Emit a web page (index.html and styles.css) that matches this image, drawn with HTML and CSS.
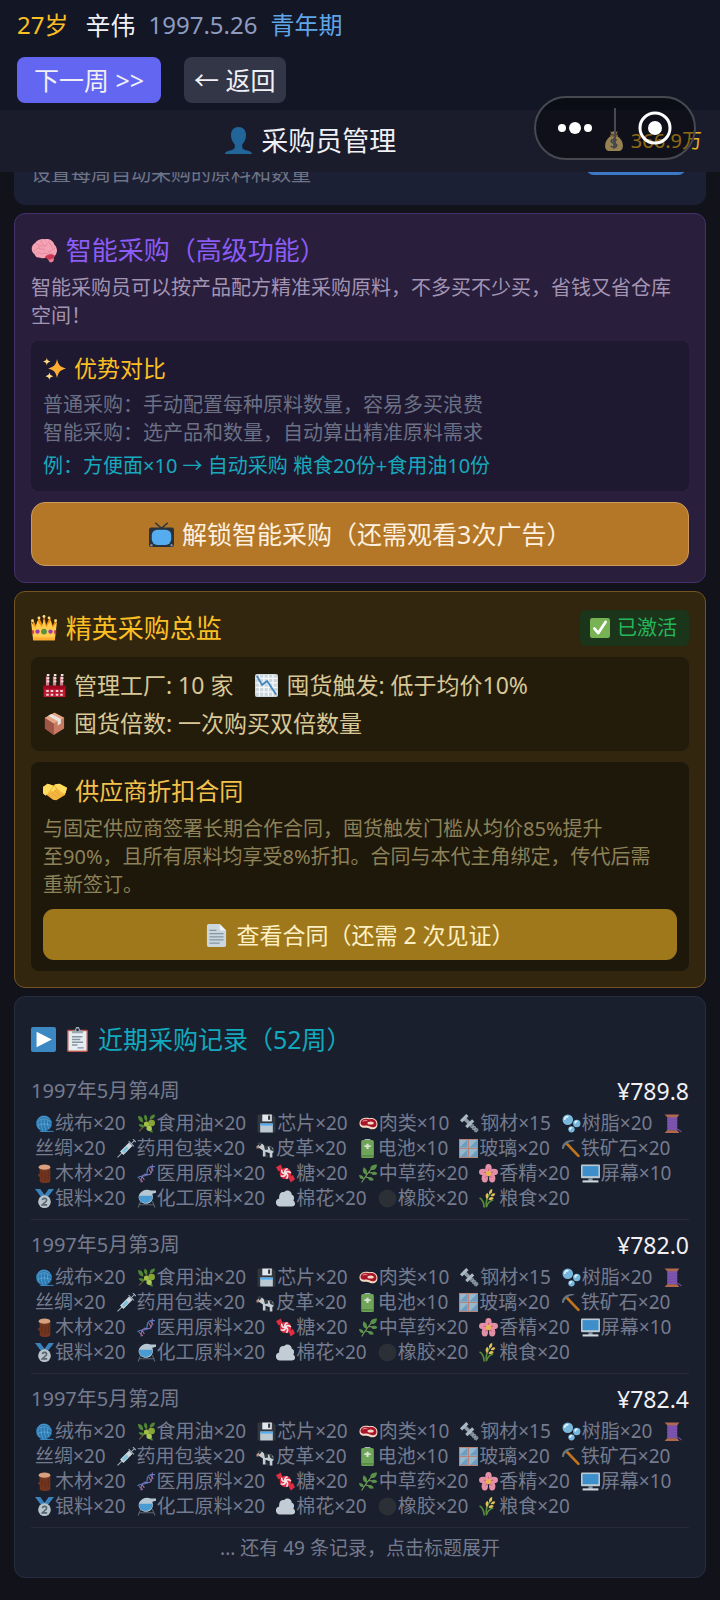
FILE: index.html
```html
<!DOCTYPE html>
<html lang="zh-CN">
<head>
    <meta charset="utf-8">
    <meta name="viewport" content="width=device-width, initial-scale=1">
    <title>采购员管理</title>
    <link rel="stylesheet" href="styles.css">
</head>
<body>
    <!-- 图标 -->
    <svg class="sprite" aria-hidden="true">
        <symbol id="user" viewBox="0 0 36 36"><path fill="#226699" d="M18 0c-6 0-10 4-10 11 0 5 2 9 5 12v4c0 2-2 3-5 4-4 1-8 2-8 5h36c0-3-4-4-8-5-3-1-5-2-5-4v-4c3-3 5-7 5-12 0-7-4-11-10-11z"/></symbol>
        <symbol id="bag" viewBox="0 0 36 36"><path fill="#fdd888" d="M12 9C6 14 2 19 2 26c0 7 3 10 8 10h16c5 0 8-3 8-10 0-7-4-12-10-17z"/><path fill="#fdd888" d="M11 1l3 5h8l3-5-4 1-3-2-3 2z"/><path fill="#bf9658" d="M11 6h14v4H11z"/><path fill="none" stroke="#67757f" stroke-width="3" d="M23 17c-2-2-9-3-10 1 0 5 10 3 10 8-1 4-8 4-11 1M18 12v20"/></symbol>
        <symbol id="brain" viewBox="0 0 36 36"><path fill="#ea7e93" d="M21 27l5 8c4 1 7-2 5-8z"/><path fill="#f4a3b5" d="M6 8c3-5 9-6 13-5 6-1 12 2 13 7 4 4 5 9 3 13-2 5-6 7-10 7-3-2-7 0-11-1-4 0-8-1-9-5-5-3-6-12 1-16z"/><path fill="none" stroke="#dc7c92" stroke-width="1" d="M7 10c4-1 5 2 4 5M14 5c-1 4 4 3 3 8 3 0 5-1 5-4M3 19c5 0 5-5 9-3s6 0 8 2M25 6c-2 4 5 3 4 9M33 16c-5 0-5 6-10 4M7 24c3-4 6-2 8 0 4-4 6 1 11-1M12 11l3 2M28 22l3 3"/><path fill="#cf3656" d="M19 28c4-5 11-5 14-2-1 4-6 6-9 5z"/></symbol>
        <symbol id="sparkles" viewBox="0 0 36 36"><path fill="#ffac33" d="M22 3c2 9 4 12 14 15-10 3-12 6-14 15-2-9-4-12-14-15C18 15 20 12 22 3z"/><path fill="#ffd983" d="M6 1c1 4 1 4 6 6-5 2-5 2-6 6C5 9 5 9 0 7c5-2 5-2 6-6zM10 24c1 4 1 4 6 6-5 2-5 2-6 6-1-4-1-4-6-6 5-2 5-2 6-6z"/></symbol>
        <symbol id="tv" viewBox="0 0 36 36"><path fill="none" stroke="#29323a" stroke-width="2" d="M9 1l9 8 9-8"/><rect y="8" width="36" height="28" rx="3" fill="#29323a"/><rect x="4" y="11" width="28" height="22" rx="8" fill="#55acee"/><path fill="#8899a6" d="M2 32h3v3H2zM31 32h3v3h-3z"/></symbol>
        <symbol id="crown" viewBox="0 0 36 36"><path fill="#f4900c" d="M2 5l5 10 4-12 5 11 2-13 3 13 5-11 4 12 5-10-2 20H3z"/><path fill="#ffcc4d" d="M0 9l6 9 3-10 6 9 3-11 3 11 6-9 3 10 6-9-3 26H3z"/><path fill="#ffac33" d="M3 31h30v4H3z"/><circle cx="18" cy="23" r="4" fill="#5c913b"/><circle cx="9" cy="23" r="3" fill="#9d3bb1"/><circle cx="27" cy="23" r="3" fill="#9d3bb1"/><path fill="#c63e45" d="M1 21h3v5H1zM32 21h3v5h-3z"/><circle cx="2" cy="8" r="2" fill="#ffd983"/><circle cx="11" cy="4" r="2" fill="#ffd983"/><circle cx="18" cy="2" r="2" fill="#ffd983"/><circle cx="25" cy="4" r="2" fill="#ffd983"/><circle cx="34" cy="8" r="2" fill="#ffd983"/></symbol>
        <symbol id="check" viewBox="0 0 36 36"><rect width="36" height="36" rx="4" fill="#77b255"/><path fill="none" stroke="#fff" stroke-width="5" stroke-linecap="round" stroke-linejoin="round" d="M8 19l7 8L28 7"/></symbol>
        <symbol id="factory" viewBox="0 0 36 36"><path fill="#be1931" d="M1 22h34v14H1z"/><path fill="#a0041e" d="M0 18h36v5H0z"/><path stroke="#cf8190" stroke-width="5" d="M7 4v14M18 4v14M29 4v14"/><path stroke="#f1e3e6" stroke-width="4" stroke-dasharray="3 2" d="M8 0v15M19 0v15M30 0v15"/><path fill="#f4d5da" d="M5 25h4v3H5zM12 25h4v3h-4zM20 25h4v3h-4zM27 25h4v3h-4zM5 31h4v3H5zM12 31h4v3h-4zM20 31h4v3h-4zM27 31h4v3h-4z"/></symbol>
        <symbol id="chart" viewBox="0 0 36 36"><rect width="36" height="36" rx="3" fill="#ccd6dd"/><path stroke="#f5f8fa" stroke-width="2" d="M7 1v34M14 1v34M21 1v34M28 1v34M1 7h34M1 14h34M1 21h34M1 28h34"/><path fill="none" stroke="#4289c1" stroke-width="3" stroke-linejoin="round" d="M3 3l8 14 8-6 14 21"/></symbol>
        <symbol id="box" viewBox="0 0 36 36"><path fill="#c67b62" d="M3 9L18 1l15 8v17l-16 10L3 26z"/><path fill="#9e5546" d="M3 9l14 9v18L3 26z"/><path fill="#e4a486" d="M3 9L18 1l15 8-16 9z"/><path fill="#e8e4de" d="M8 6l5-3 15 8v7l-5 3v-7z"/></symbol>
        <symbol id="shake" viewBox="0 0 36 36"><path fill="#f4b63f" d="M0 12l7-5 9 3 8-3 12 6-3 11-13 8-5-1L3 22z"/><path fill="#ffdc5d" d="M0 12l7-5 9 3 2-2 7-1 11 6-2 8-5 2-9-9-5 5-4-2-7 8-5-4z"/><path fill="none" stroke="#e39a35" stroke-width="1" stroke-linecap="round" d="M11 17l6-7 4 5 10 8M18 18l9 8M14 21l8 7M8 24l4 3"/></symbol>
        <symbol id="page" viewBox="0 0 36 36"><path fill="#ccd6dd" d="M7 0h16l10 10v23c0 2-1 3-3 3H6c-2 0-3-1-3-3V3c0-2 2-3 4-3z"/><path fill="#eef3f6" d="M23 0l10 10h-8c-1 0-2-1-2-2z"/><path stroke="#8295a2" stroke-width="2" d="M7 10h11M7 15h22M7 20h22M7 25h22M7 30h16"/></symbol>
        <symbol id="play" viewBox="0 0 36 36"><rect width="36" height="36" rx="3" fill="#3b88c3"/><path fill="#fff" d="M8 7l22 11L8 29z"/></symbol>
        <symbol id="clip" viewBox="0 0 36 36"><rect x="3" y="4" width="30" height="32" rx="2" fill="#c1554f"/><path fill="#e7edf0" d="M5 6h26v28H5z"/><path fill="#99aab5" d="M10 9h16V5h-4l-2-5h-4l-2 5h-4z"/><circle cx="18" cy="4" r="2" fill="#2c3038"/><path stroke="#8295a2" stroke-width="2" d="M10 14h15M10 18h12M10 22h16M10 26h8M18 30h9"/></symbol>

        <symbol id="yarn" viewBox="0 0 36 36"><circle cx="17" cy="18" r="15" fill="#2b79b0"/><path fill="none" stroke="#73b7e4" stroke-width="1" d="M4 15c8-8 18-8 27 1M5 11c6-8 15-8 23-2M12 10c-1 8 0 15 3 22M18 10c-1 8 0 14 3 21M24 12c-1 6 0 12 3 16M6 14c-1 6 0 11 3 15M5 22c8-4 18-4 26 0"/><path fill="none" stroke="#3b88c3" stroke-width="2" d="M9 32c9 3 15 0 26 1"/></symbol>
        <symbol id="olive" viewBox="0 0 36 36"><path fill="none" stroke="#7a5a32" stroke-width="2" d="M4 33L32 4"/><path fill="#4f8736" d="M2 4c7 0 10 5 10 12C5 16 2 10 2 4zM15 1c5 3 6 8 3 13-5-4-6-8-3-13zM3 20c6-2 11 0 12 4-5 3-10 1-12-4zM21 26c5 0 9 3 9 9-6 0-9-4-9-9zM34 1c0 7-4 9-10 9 0-6 4-9 10-9z"/><circle cx="18" cy="19" r="5" fill="#9fbf43"/><circle cx="28" cy="17" r="6" fill="#85a637"/><circle cx="23" cy="27" r="5" fill="#a9c957"/></symbol>
        <symbol id="disk" viewBox="0 0 36 36"><path fill="#31373d" d="M3 1h27l5 5v29H1V3z"/><path fill="#e1e8ed" d="M10 1h18v13H10z"/><path fill="#31373d" d="M21 3h4v8h-4z"/><path fill="#bcc9d2" d="M6 18h24v17H6z"/><path fill="#55acee" d="M6 18h24v4H6z"/></symbol>
        <symbol id="meat" viewBox="0 0 36 36"><path fill="#f2d9c4" d="M1 16C3 7 13 6 20 8c8-2 15 3 15 11 0 7-4 10-9 10-6 0-8-4-14-3C5 27 0 23 1 16z"/><path fill="#a81429" d="M3 15C6 8 13 8 20 10c8-2 13 3 13 9 0 5-4 7-8 6-5-1-7-4-13-3-6 1-10-2-9-7z"/><ellipse cx="22" cy="17" rx="6" ry="3" fill="#f2d9c4"/><path fill="none" stroke="#e07c84" stroke-width="2" d="M7 14c4-3 7-2 9-1"/></symbol>
        <symbol id="bolt" viewBox="0 0 36 36"><path stroke="#8d9ba6" stroke-width="7" d="M9 9l24 24"/><path stroke="#aab8c2" stroke-width="6" d="M2 14L14 2M12 25L25 12"/><path stroke="#67757f" stroke-width="2" d="M19 26l7-7M23 30l7-7M27 34l7-7"/></symbol>
        <symbol id="bubbles" viewBox="0 0 36 36"><circle cx="11" cy="11" r="10" fill="#78b7dc"/><circle cx="28" cy="18" r="7" fill="#78b7dc"/><circle cx="18" cy="29" r="6" fill="#78b7dc"/><path fill="none" stroke="#e1f3ff" stroke-width="3" stroke-linecap="round" d="M5 10c1-3 3-5 6-5M25 17c0-2 1-3 3-3M15 29c0-2 1-3 3-3"/></symbol>
        <symbol id="thread" viewBox="0 0 36 36"><path fill="#7650a8" d="M8 5h19v26H8z"/><path stroke="#8a62bb" stroke-width="1" d="M8 10l19-3M8 15l19-3M8 20l19-3M8 25l19-3M8 30l19-3"/><path fill="#b0694e" d="M3 1h28l-4 5H8zM8 31h19l4 5H3z"/><path fill="none" stroke="#7650a8" stroke-width="2" d="M27 29c4 0 5 4 8 5"/></symbol>
        <symbol id="syringe" viewBox="0 0 36 36"><path stroke="#9eb2c0" stroke-width="2" d="M1 35l10-10M27 9l7-7M30 0l6 6M22 4l10 10"/><path stroke="#ccd6dd" stroke-width="9" d="M9 27L26 10"/><path stroke="#7cc2dd" stroke-width="5" d="M11 25l9-9"/></symbol>
        <symbol id="cow" viewBox="0 0 36 36"><path fill="#c3cdd4" d="M5 8l7 1 5 5h12l4 4v8h-2v9h-5v-8l-8-3v9h-5V22l-7-5-4-2z"/><path fill="#32383e" d="M2 8l6-3 3 4-4 5zM15 13h7l1 7-6 1zM25 14h5l3 9-6-2zM19 30h4v5h-4zM33 15l3 10-3-3z"/><path fill="#b98a76" d="M1 13l5 1-1 4H1z"/></symbol>
        <symbol id="battery" viewBox="0 0 36 36"><rect x="12" y="0" width="12" height="6" rx="2" fill="#aab8c2"/><rect x="6" y="2" width="24" height="34" rx="3" fill="#6ea558"/><path fill="#d9e5d2" d="M16 9h4v3h4v3h-4v4h-4v-4h-4v-3h4z"/><path fill="#4c7c3c" d="M6 31h24v2H6z"/></symbol>
        <symbol id="window" viewBox="0 0 36 36"><path fill="#96b8cf" d="M1 1h34v34H1z"/><path fill="#6d9dc0" d="M16 1v15H1zM35 1v15H20zM16 20v15H1zM35 20v15H20z"/><path fill="none" stroke="#b98478" stroke-width="2" d="M1 1h34v34H1zM18 1v34M1 18h34"/></symbol>
        <symbol id="pick" viewBox="0 0 36 36"><path stroke="#bf741d" stroke-width="5" stroke-linecap="round" d="M12 10l21 22"/><path fill="#66757f" d="M2 19C1 9 9 1 23 2l3 2C15 5 8 9 5 19z"/></symbol>
        <symbol id="wood" viewBox="0 0 36 36"><path fill="#74351f" d="M8 6h21v27c-4 4-16 4-20 0v-8l-4-4 4-3z"/><ellipse cx="18" cy="6" rx="11" ry="5" fill="#d9a080"/><path stroke="#5f2c19" stroke-width="2" d="M13 14v13M19 16v15M25 13v16"/></symbol>
        <symbol id="dna" viewBox="0 0 36 36"><path stroke="#aa6b91" stroke-width="2" d="M4 27l7 7M9 23l5 7M14 19l7 2M22 9l5 8M25 5l6 8"/><path fill="none" stroke="#4986c9" stroke-width="2" d="M1 26c9-7 18 1 18-10S25 4 34 5"/><path fill="none" stroke="#8871bf" stroke-width="2" d="M8 35c-1-10 2-16 10-15 10 2 11-5 11-19"/></symbol>
        <symbol id="candy" viewBox="0 0 36 36"><path fill="#dd2e44" d="M0 6L9 1l4 10-8 3zM36 29l-8 6-5-10 9-4z"/><circle cx="18" cy="18" r="11" fill="#dd2e44"/><path fill="none" stroke="#f5e6e8" stroke-width="3" d="M18 18c-4-5 1-8 4-9M18 18c2-6 8-3 10-1M18 18c6 1 4 7 2 10M18 18c0 6-6 6-9 4M18 18c-6 1-8-4-7-7"/></symbol>
        <symbol id="herb" viewBox="0 0 36 36"><path fill="none" stroke="#77a35b" stroke-width="2" d="M5 35C12 24 17 15 29 4M12 24l12 4M18 16l11 1M15 20L9 12"/><path fill="#5a9148" d="M22 11c-2-6 3-10 12-10 0 8-5 12-12 10zM23 18c3-5 9-4 12 0-4 4-9 4-12 0zM17 26c5-3 10 0 11 5-6 2-10 0-11-5zM14 20C7 18 6 12 9 6c6 4 8 9 5 14zM9 28c-5 2-8-1-9-7 6 0 9 3 9 7z"/></symbol>
        <symbol id="flower" viewBox="0 0 36 36"><g fill="#e48fa8"><ellipse cx="18" cy="8" rx="6" ry="8"/><ellipse cx="28" cy="15" rx="8" ry="6"/><ellipse cx="25" cy="27" rx="6" ry="8"/><ellipse cx="11" cy="27" rx="6" ry="8"/><ellipse cx="8" cy="15" rx="8" ry="6"/></g><path stroke="#d3607f" stroke-width="2" d="M18 18V9M18 18l9-3M18 18l6 8M18 18l-6 8M18 18l-9-3"/><circle cx="18" cy="18" r="5" fill="#e8b352"/></symbol>
        <symbol id="screen" viewBox="0 0 36 36"><rect y="1" width="36" height="26" rx="2" fill="#b9c8d2"/><path fill="#3c8fca" d="M3 4h30v19H3z"/><path fill="#8497a3" d="M14 27h8v5h-8z"/><path fill="#ccd6dd" d="M3 31h30v4H3z"/></symbol>
        <symbol id="medal" viewBox="0 0 36 36"><path fill="#3b82bd" d="M0 0h10l11 15-6 5zM26 0h10L22 18l-7-3z"/><circle cx="18" cy="24" r="12" fill="#b8c4cc"/><path fill="none" stroke="#58646e" stroke-width="3" d="M14 21c1-5 9-4 8 1 0 2-5 4-8 8h9"/></symbol>
        <symbol id="flask" viewBox="0 0 36 36"><path stroke="#596570" stroke-width="2" d="M7 23L2 35M29 23l5 12M3 30h30"/><path fill="#b5c7d2" d="M5 9C11 0 20 0 26 3h10v4l-7 2c4 11-3 19-12 19S-1 19 5 9z"/><path fill="#4a9bd2" d="M4 13h25c3 17-28 19-25 0z"/></symbol>
        <symbol id="cloud" viewBox="0 0 36 36"><path fill="#c2ccd4" d="M6 18C5 9 10 5 15 6c5-6 15-3 15 5 5 2 5 7 3 11 7 7 1 12-4 11H7c-9-1-10-13-1-15z"/></symbol>
        <symbol id="black" viewBox="0 0 36 36"><circle cx="18" cy="18" r="17" fill="#2a3036"/></symbol>
        <symbol id="rice" viewBox="0 0 36 36"><path fill="none" stroke="#598c3b" stroke-width="3" d="M14 35C12 22 15 14 24 5M10 35C9 25 6 19 1 17M14 34c3-9 6-12 13-13"/><path fill="#e3bd57" d="M19 10c-1-6 2-9 6-10 1 5-1 9-6 10zM22 13c2-5 6-6 9-4-2 5-5 6-9 4zM15 19c-4-5-3-9 1-12 3 4 2 9-1 12zM18 20c2-5 6-6 10-3-3 4-6 5-10 3z"/></symbol>
    </svg>

    <header class="header">
        <div class="status">
            <div class="info">
                <span class="age">27岁</span>
                <span class="name">辛伟</span>
                <span class="date">1997.5.26</span>
                <span class="stage">青年期</span>
            </div>
            <div class="actions">
                <button class="btn btn-next">下一周 &gt;&gt;</button>
                <button class="btn btn-back">← 返回</button>
            </div>
        </div>
        <div class="navbar">
            <span></span>
            <h1><svg class="icon"><use href="#user"/></svg> 采购员管理</h1>
            <span class="money"><svg class="icon"><use href="#bag"/></svg> 366.9万</span>
        </div>
    </header>

    <div class="capsule">
        <button aria-label="更多"><svg width="34" height="14" viewBox="0 0 34 14"><g fill="#fff"><circle cx="4" cy="7" r="4"/><circle cx="17" cy="7" r="6"/><circle cx="30" cy="7" r="4"/></g></svg></button>
        <i></i>
        <button aria-label="关闭"><svg width="34" height="34" viewBox="0 0 34 34"><circle cx="17" cy="17" r="15" fill="none" stroke="#fff" stroke-width="3"/><circle cx="17" cy="17" r="7" fill="#fff"/></svg></button>
    </div>

    <main class="content">
        <section class="card auto">
            <p>设置每周自动采购的原料和数量</p>
            <button class="auto-btn" aria-label="设置"></button>
        </section>

        <section class="card smart">
            <h2><svg class="icon"><use href="#brain"/></svg> 智能采购（高级功能）</h2>
            <p class="desc">智能采购员可以按产品配方精准采购原料，不多买不少买，省钱又省仓库<br>空间！</p>
            <div class="panel">
                <h3><svg class="icon"><use href="#sparkles"/></svg> 优势对比</h3>
                <p>普通采购：手动配置每种原料数量，容易多买浪费</p>
                <p>智能采购：选产品和数量，自动算出精准原料需求</p>
                <p class="example">例：方便面×10 → 自动采购 粮食20份+食用油10份</p>
            </div>
            <button class="btn btn-unlock"><svg class="icon"><use href="#tv"/></svg> 解锁智能采购（还需观看3次广告）</button>
        </section>

        <section class="card elite">
            <div class="card-head">
                <h2><svg class="icon"><use href="#crown"/></svg> 精英采购总监</h2>
                <span class="badge"><svg class="icon"><use href="#check"/></svg> 已激活</span>
            </div>
            <div class="panel stats">
                <span><svg class="icon"><use href="#factory"/></svg> 管理工厂: 10 家</span>
                <span><svg class="icon"><use href="#chart"/></svg> 囤货触发: 低于均价10%</span>
                <span><svg class="icon"><use href="#box"/></svg> 囤货倍数: 一次购买双倍数量</span>
            </div>
            <div class="panel contract">
                <h3><svg class="icon"><use href="#shake"/></svg> 供应商折扣合同</h3>
                <p>与固定供应商签署长期合作合同，囤货触发门槛从均价85%提升<br>至90%，且所有原料均享受8%折扣。合同与本代主角绑定，传代后需<br>重新签订。</p>
                <button class="btn btn-contract"><svg class="icon"><use href="#page"/></svg> 查看合同（还需 2 次见证）</button>
            </div>
        </section>

        <section class="card history">
            <h2><svg class="icon"><use href="#play"/></svg> <svg class="icon"><use href="#clip"/></svg> 近期采购记录（52周）</h2>
            <div id="records"></div>
            <p class="more">... 还有 49 条记录，点击标题展开</p>
        </section>
    </main>

    <script>
        (function() {
            var records = [
                { week: '1997年5月第4周', cost: '789.8' },
                { week: '1997年5月第3周', cost: '782.0' },
                { week: '1997年5月第2周', cost: '782.4' }
            ];

            // 图标, 名称, 数量
            var goods = [
                ['yarn', '绒布', 20], ['olive', '食用油', 20], ['disk', '芯片', 20], ['meat', '肉类', 10],
                ['bolt', '钢材', 15], ['bubbles', '树脂', 20], ['thread', '丝绸', 20], ['syringe', '药用包装', 20],
                ['cow', '皮革', 20], ['battery', '电池', 10], ['window', '玻璃', 20], ['pick', '铁矿石', 20],
                ['wood', '木材', 20], ['dna', '医用原料', 20], ['candy', '糖', 20], ['herb', '中草药', 20],
                ['flower', '香精', 20], ['screen', '屏幕', 10], ['medal', '银料', 20], ['flask', '化工原料', 20],
                ['cloud', '棉花', 20], ['black', '橡胶', 20], ['rice', '粮食', 20]
            ];

            var items = '';
            for (var i = 0; i < goods.length; i++) {
                items += '<span class="item"><svg class="icon"><use href="#' + goods[i][0] + '"/></svg>' +
                    goods[i][1] + '×' + goods[i][2] + '</span> ';
            }

            var html = '';
            records.forEach(function(r) {
                html += '<div class="record"><div class="record-head"><span>' + r.week + '</span>' +
                    '<span class="cost">¥' + r.cost + '</span></div><div class="items">' + items + '</div></div>';
            });
            document.getElementById('records').innerHTML = html;
        })();
    </script>
</body>
</html>
```

FILE: styles.css
```css
* {
    margin: 0;
    padding: 0;
    box-sizing: border-box;
}
body {
    background: #12121b;
    color: #f0f0f5;
    font-family: "Noto Sans", "Noto Sans CJK SC", sans-serif;
    font-size: 20px;
    line-height: 28px;
}
h1, h2, h3 {
    font-weight: 400;
}
button {
    border: 0;
    background: none;
    color: inherit;
    font: inherit;
    cursor: pointer;
}
.sprite {
    position: absolute;
    width: 0;
    height: 0;
}
.icon {
    width: 1em;
    height: 1em;
    margin-right: 2px;
    vertical-align: -3px;
}

/* 顶部 */
.header {
    position: sticky;
    top: 0;
    z-index: 10;
}
.status {
    padding: 8px 17px 7px;
    background: #131625;
}
.info {
    display: flex;
    gap: 13px;
    height: 36px;
    font-size: 24px;
    line-height: 34px;
}
.age {
    margin-right: 4px;
    color: #fbbf24;
}
.name {
    font-size: 25px;
}
.date {
    color: #8e9cc0;
}
.stage {
    color: #60a5e8;
}
.actions {
    display: flex;
    gap: 23px;
    margin-top: 13px;
}
.btn {
    border-radius: 8px;
    font-size: 25px;
}
.btn-next {
    height: 46px;
    padding: 0 17px;
    background: #6366f1;
}
.btn-back {
    height: 46px;
    padding: 0 10px;
    background: #333647;
}
.navbar {
    display: flex;
    align-items: center;
    justify-content: space-between;
    height: 62px;
    padding: 0 18px;
    background: #1a1c2b;
}
.navbar h1 {
    font-size: 27px;
}
.money {
    color: #eab020;
    font-size: 20px;
}

/* 右上角胶囊 */
.capsule {
    position: fixed;
    top: 96px;
    right: 24px;
    z-index: 20;
    display: flex;
    align-items: center;
    width: 162px;
    height: 64px;
    border: 2px solid #484950;
    border-radius: 32px;
    background: rgba(0, 0, 0, .4);
}
.capsule button {
    display: flex;
    flex: 1;
    justify-content: center;
}
.capsule i {
    width: 2px;
    height: 40px;
    background: #484950;
}

/* 卡片 */
.content {
    display: flex;
    flex-direction: column;
    gap: 8px;
    margin-top: -60px;
    padding: 0 14px 23px;
}
.card {
    padding: 16px;
    border: 1px solid;
    border-radius: 11px;
}
.card h2 {
    font-size: 26px;
    line-height: 40px;
}
.panel {
    margin-top: 11px;
    padding: 11px 12px;
    border-radius: 8px;
}
.panel h3 {
    font-size: 23px;
    line-height: 32px;
}

.auto {
    display: flex;
    align-items: flex-end;
    justify-content: space-between;
    border-color: #1c2035;
    background: #1c2035;
    color: #6f7486;
}
.auto-btn {
    width: 100px;
    height: 46px;
    margin: 0 3px 13px 0;
    border-radius: 8px;
    background: #3b78c8;
}

.smart {
    border-color: #44306a;
    background: #291e3b;
}
.smart h2 {
    color: #8b5cf6;
}
.desc {
    margin-top: 4px;
    color: #a294b3;
}
.smart .panel {
    background: #1e1930;
    color: #6b7085;
}
.smart h3 {
    margin-bottom: 7px;
    color: #fbbf24;
}
.smart .example {
    margin-top: 5px;
    color: #18a8bd;
}
.btn-unlock {
    width: 100%;
    height: 64px;
    margin-top: 11px;
    border: 1px solid #cb9a5c;
    border-radius: 14px;
    background: #b47728;
    color: #fdf0df;
}

.elite {
    border-color: #73531f;
    background: #33260f;
}
.elite h2 {
    color: #fbbf24;
}
.card-head {
    display: flex;
    align-items: center;
    justify-content: space-between;
}
.badge {
    padding: 4px 12px 4px 10px;
    border-radius: 6px;
    background: #1b351a;
    color: #25b75b;
}
.stats {
    display: flex;
    flex-wrap: wrap;
    column-gap: 22px;
    margin-top: 9px;
    padding: 9px 12px;
    background: #241c0b;
    color: #d8c897;
    font-size: 23px;
    line-height: 38px;
}
.contract {
    background: #1e180b;
    color: #8d8158;
}
.contract h3 {
    margin-bottom: 6px;
    color: #f4c24a;
    font-size: 24px;
    line-height: 36px;
}
.btn-contract {
    width: 100%;
    height: 51px;
    margin-top: 10px;
    border-radius: 11px;
    background: #9f781c;
    color: #fdf0c4;
    font-size: 23px;
}

/* 采购记录 */
.history {
    border-color: #252d3f;
    background: #1a1f2d;
    color: #757b8e;
}
.history h2 {
    color: #12a9bf;
    font-size: 25px;
    line-height: 53px;
}
.record {
    padding: 10px 0 8px;
    border-bottom: 1px solid #272b39;
}
.record-head {
    display: flex;
    justify-content: space-between;
    margin-bottom: 5px;
    line-height: 30px;
}
.cost {
    color: #f0f0f5;
    font-size: 23px;
}
.items {
    padding: 0 4px;
    font-size: 19px;
    line-height: 25px;
}
.item {
    margin-right: 6px;
}
.item .icon {
    margin-right: 1px;
}
.more {
    padding-top: 7px;
    font-size: 19px;
    line-height: 26px;
    text-align: center;
}
```
